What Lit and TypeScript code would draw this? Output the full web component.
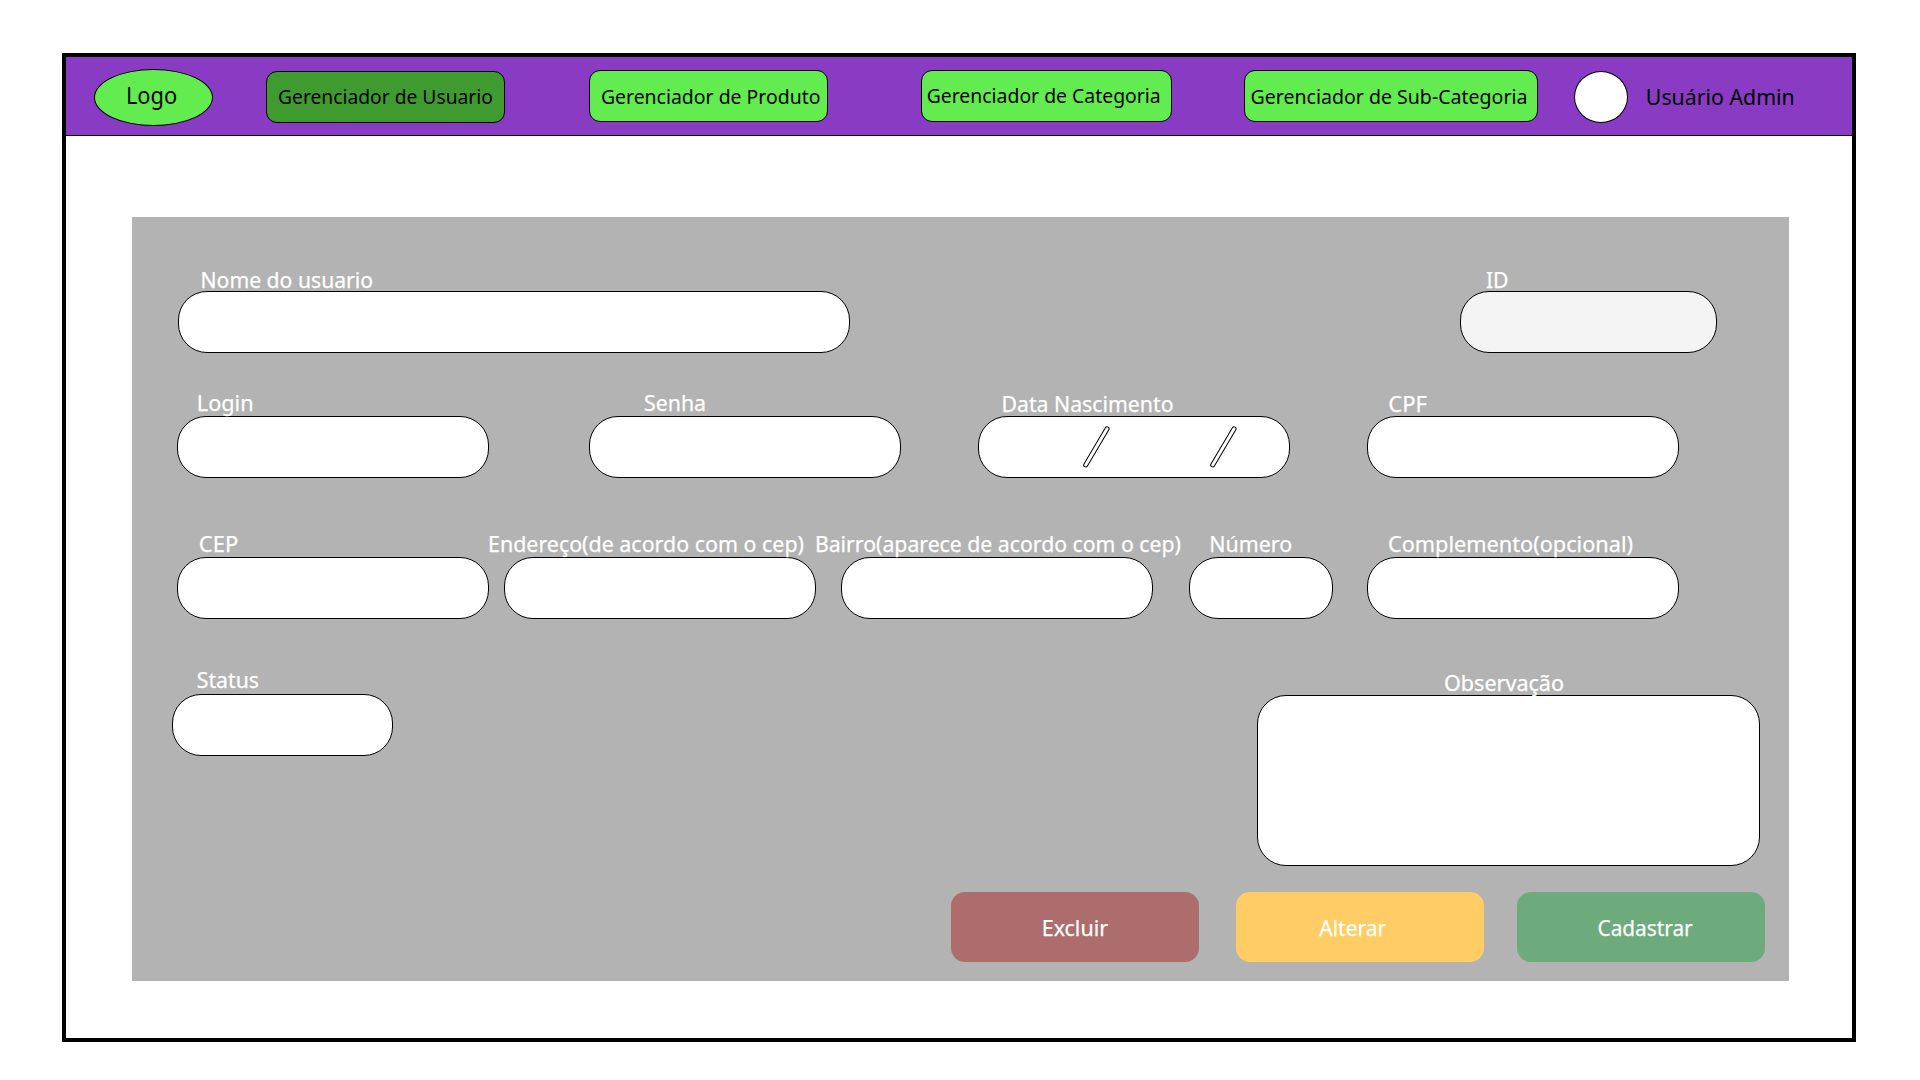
import { LitElement, html, css } from "lit";
import { customElement } from "lit/decorators.js";

interface Caption {
  text: string;
  x: number;
  y: number;
  length: number;
}

interface Field extends Caption {
  name: string;
  slashes?: boolean;
}

interface Action extends Caption {
  name: string;
}

const caption = (c: Caption) => html`
  <svg class="caption" aria-label=${c.text}>
    <text x=${c.x} y=${c.y} textLength=${c.length} lengthAdjust="spacingAndGlyphs">${c.text}</text>
  </svg>
`;

const NAV: Action[] = [
  { name: "users active", text: "Gerenciador de Usuario", x: 11.1, y: 31.7, length: 214.8 },
  { name: "products", text: "Gerenciador de Produto", x: 10.9, y: 33, length: 219.6 },
  { name: "categories", text: "Gerenciador de Categoria", x: 4.7, y: 32, length: 234 },
  { name: "subcategories", text: "Gerenciador de Sub-Categoria", x: 5.5, y: 33, length: 277 },
];

const ROWS: Field[][] = [
  [
    { name: "nome", text: "Nome do usuario", x: 22.5, y: 20.8, length: 172.6 },
    { name: "id", text: "ID", x: 25.9, y: 21, length: 22.6 },
  ],
  [
    { name: "login", text: "Login", x: 19.8, y: 19, length: 56.8 },
    { name: "senha", text: "Senha", x: 55, y: 19, length: 62 },
    { name: "nascimento", text: "Data Nascimento", x: 23.5, y: 20, length: 172 },
    { name: "cpf", text: "CPF", x: 21.2, y: 20, length: 38.8 },
  ].map((f) => ({ ...f, slashes: f.name === "nascimento" })),
  [
    { name: "cep", text: "CEP", x: 21.8, y: 19, length: 39.4 },
    { name: "endereco", text: "Endereço(de acordo com o cep)", x: -16, y: 19, length: 316 },
    { name: "bairro", text: "Bairro(aparece de acordo com o cep)", x: -26.1, y: 19, length: 366 },
    { name: "numero", text: "Número", x: 20.3, y: 19, length: 82.8 },
    { name: "complemento", text: "Complemento(opcional)", x: 21, y: 19, length: 245 },
  ],
  [
    { name: "status", text: "Status", x: 24.8, y: 18, length: 62.2 },
    { name: "observacao", text: "Observação", x: 187, y: 20, length: 120 },
  ],
];

const ACTIONS: Action[] = [
  { name: "delete", text: "Excluir", x: 90.7, y: 43.8, length: 66.4 },
  { name: "edit", text: "Alterar", x: 83.3, y: 43.8, length: 66.8 },
  { name: "create", text: "Cadastrar", x: 80.5, y: 43.8, length: 95.2 },
];

@customElement("app-root")
export class AppRoot extends LitElement {
  static styles = css`
    :host {
      display: block;
      box-sizing: border-box;
      width: 1920px;
      height: 1080px;
      padding: 53px 64px 38px 62px;
      background: #fff;
      font-family: "Noto Sans", "Open Sans", sans-serif;
      font-size: 22.6px;
      overflow: hidden;
    }
    *,
    *::before {
      box-sizing: border-box;
    }
    .window {
      width: 1794px;
      height: 989px;
      border: 4px solid #000;
    }
    .topbar {
      display: flex;
      align-items: flex-start;
      height: 79px;
      padding: 12px 0 0 28px;
      background: #893bc3;
      border-bottom: 1px solid #000;
    }
    .caption {
      display: block;
      width: 100%;
      height: 100%;
      overflow: visible;
    }
    .caption text {
      fill: currentColor;
      white-space: pre;
    }
    .panel .caption text {
      stroke: currentColor;
      stroke-width: 0.25px;
    }
    .logo,
    .nav-item {
      flex: none;
      border: 1px solid #000;
      background: #62ec50;
      color: #000;
    }
    .logo {
      width: 119px;
      height: 57px;
      border-radius: 50%;
      font-size: 23px;
    }
    .nav {
      display: flex;
    }
    .nav-item {
      height: 52px;
      margin-top: 1px;
      border-radius: 11px;
      font-size: 20.6px;
    }
    .users {
      width: 239px;
      margin: 2px 0 0 53px;
    }
    .active {
      background: #3f9b30;
    }
    .products {
      width: 239px;
      margin-left: 84px;
    }
    .categories {
      width: 251px;
      margin-left: 93px;
    }
    .subcategories {
      width: 294px;
      margin-left: 72px;
    }
    .avatar {
      flex: none;
      width: 54px;
      height: 52px;
      margin: 2px 0 0 36px;
      border: 1px solid #000;
      border-radius: 50%;
      background: #fff;
    }
    .account {
      width: 170px;
      height: 52px;
      margin: 2px 0 0 17px;
    }
    .panel {
      width: 1657px;
      height: 764px;
      margin: 81px 0 0 66px;
      padding-top: 50px;
      background: #b3b3b3;
      color: #fff;
    }
    .row {
      display: flex;
      align-items: flex-start;
    }
    .row-1 {
      margin-top: 39px;
    }
    .row-2 {
      margin-top: 55px;
    }
    .row-3 {
      margin-top: 51px;
    }
    .field {
      flex: none;
      width: 312px;
    }
    .label {
      position: relative;
      z-index: 1;
      height: 24px;
    }
    .input {
      height: 62px;
      border: 1px solid #000;
      border-radius: 29px;
      background: #fff;
    }
    .nome {
      width: 672px;
      margin-left: 46px;
    }
    .id {
      width: 257px;
      margin-left: 610px;
    }
    .id .input {
      background: #f4f4f4;
    }
    .login,
    .cep {
      margin-left: 45px;
    }
    .senha {
      margin-left: 100px;
    }
    .nascimento,
    .cpf {
      margin-left: 77px;
    }
    .endereco {
      margin-left: 15px;
    }
    .bairro {
      margin-left: 25px;
    }
    .numero {
      width: 144px;
      margin-left: 36px;
    }
    .complemento {
      margin-left: 34px;
    }
    .status {
      width: 221px;
      margin-left: 40px;
    }
    .observacao {
      width: 503px;
      margin: 1px 0 0 864px;
    }
    .observacao .input {
      height: 171px;
    }
    .slashes {
      display: block;
      width: 310px;
      height: 60px;
      stroke-linecap: round;
    }
    .edge {
      stroke: #000;
      stroke-width: 5;
    }
    .core {
      stroke: #fff;
      stroke-width: 3;
    }
    .actions {
      display: flex;
      margin-top: 26px;
    }
    .action {
      flex: none;
      width: 248px;
      height: 70px;
      border-radius: 14px;
    }
    .delete {
      margin-left: 819px;
      background: #ac6d6c;
    }
    .edit {
      margin-left: 37px;
      background: #ffcc66;
    }
    .create {
      margin-left: 33px;
      background: #6dab7c;
    }
  `;

  private renderSlashes() {
    return html`
      <svg class="slashes" viewBox="0 0 310 60">
        <path class="edge" d="M106.7 47.9 L128.1 11.8 M233.7 47.9 L255.1 11.8" />
        <path class="core" d="M106.7 47.9 L128.1 11.8 M233.7 47.9 L255.1 11.8" />
      </svg>
    `;
  }

  private renderField(f: Field) {
    return html`
      <div class="field ${f.name}">
        <div class="label">${caption(f)}</div>
        <div class="input">${f.slashes ? this.renderSlashes() : null}</div>
      </div>
    `;
  }

  render() {
    return html`
      <div class="window">
        <header class="topbar">
          <div class="logo">${caption({ text: "Logo", x: 30.9, y: 34, length: 51.4 })}</div>
          <nav class="nav">
            ${NAV.map((n) => html`<div class="nav-item ${n.name}">${caption(n)}</div>`)}
          </nav>
          <div class="avatar"></div>
          <div class="account">${caption({ text: "Usuário Admin", x: 0.8, y: 34, length: 149 })}</div>
        </header>
        <main class="panel">
          ${ROWS.map(
            (row, i) => html`<div class="row row-${i}">${row.map((f) => this.renderField(f))}</div>`
          )}
          <div class="actions">
            ${ACTIONS.map((a) => html`<div class="action ${a.name}">${caption(a)}</div>`)}
          </div>
        </main>
      </div>
    `;
  }
}
